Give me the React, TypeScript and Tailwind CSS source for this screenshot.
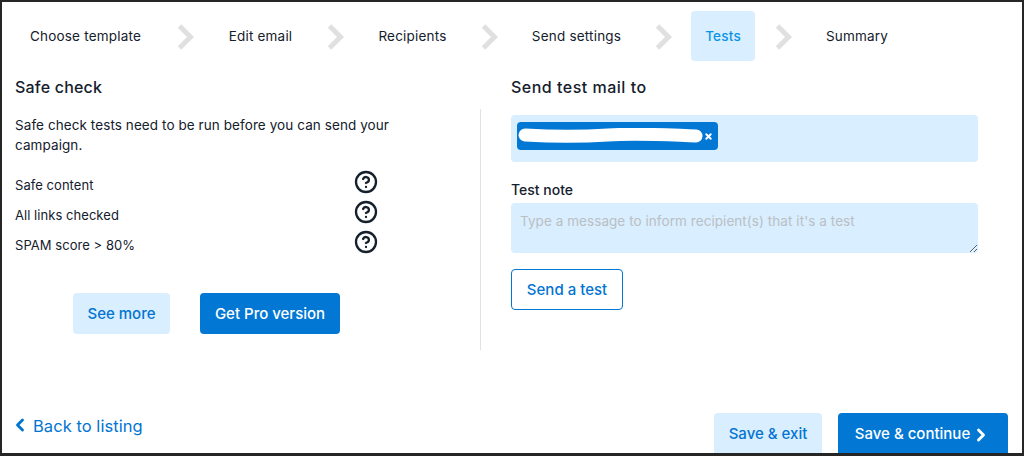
import { ChevronLeft, ChevronRight, CircleHelp, X } from 'lucide-react';

const STEPS = [
  { label: 'Choose template', width: 'w-[143px]' },
  { label: 'Edit email', width: 'w-[93px]' },
  { label: 'Recipients', width: 'w-[97px]' },
  { label: 'Send settings', width: 'w-[117px]' },
  { label: 'Tests', width: 'w-[64px] -ml-[1px]' },
  { label: 'Summary', width: 'w-[90px]' },
];
const CHECKS = ['Safe content', 'All links checked', 'SPAM score > 80%'];

// Big grey separator between the wizard steps
function StepArrow() {
  return (
    <svg width="16" height="26" viewBox="0 0 16 26" className="ml-[21px] mr-[20px] mt-[1px] flex-shrink-0">
      <path d="M1.5 2 L12.5 13 L1.5 24" fill="none" stroke="#e0e0e0" strokeWidth="5" />
    </svg>
  );
}

export default function App() {
  return (
    <div className="w-[1024px] h-[456px] flex flex-col overflow-hidden bg-white border-x-2 border-t-2 border-b-[3px] border-[#262626] text-[#14202c] font-['Inter','Liberation_Sans',sans-serif]">
      <nav className="flex items-center h-[50px] mt-[9px] ml-[12px]">
        {STEPS.map(({ label, width }, i) => (
          <div key={label} className="flex items-center">
            {i > 0 && <StepArrow />}
            <div
              className={`${width} h-[50px] flex items-center justify-center rounded text-[13.5px] tracking-[0.2px] ${
                label === 'Tests' ? 'bg-[#d9eefe] text-[#0a95e6] font-medium' : ''
              }`}
            >
              {label}
            </div>
          </div>
        ))}
      </nav>

      <div className="flex mt-[15px] ml-[13px]">
        <section className="w-[465px] flex-shrink-0">
          <h2 className="text-[16px] leading-[24px] font-medium tracking-[0.2px] -mt-[1px]">Safe check</h2>
          <p className="text-[13.5px] leading-[20px] mt-[16px] w-[400px] tracking-[0.08px]">
            Safe check tests need to be run before you can send your campaign.
          </p>
          <ul className="mt-[16px] flex flex-col gap-[8px]">
            {CHECKS.map((label) => (
              <li key={label} className="flex items-start h-[22px] w-[363px] justify-between">
                <span className="text-[13px] leading-[20px] mt-[4px] tracking-[0.05px]">{label}</span>
                <CircleHelp size={24} strokeWidth={2.3} className="text-[#14202c] -mt-[1px]" />
              </li>
            ))}
          </ul>
          <div className="flex gap-[30px] ml-[58px] mt-[40px]">
            <button type="button" className="w-[97px] h-[41px] pt-[2px] rounded bg-[#d9eefe] text-[#0274d1] text-[15px] font-medium">
              See more
            </button>
            <button type="button" className="w-[140px] h-[41px] pt-[2px] rounded bg-[#0277d4] text-white text-[15px] font-medium">
              Get Pro version
            </button>
          </div>
        </section>

        <section className="flex-1 flex">
          <div className="w-[1px] h-[241px] mt-[33px] bg-[#dfe3e6]" />
          <div className="w-[467px] ml-[30px]">
            <h2 className="text-[16px] leading-[24px] font-medium tracking-[0.5px] -mt-[1px]">Send test mail to</h2>
            <div className="h-[47px] rounded bg-[#d9eefe] mt-[16px] p-[6px] pt-[7px]">
              <div className="w-[201px] h-[28px] rounded bg-[#0277d4] flex items-center pl-[1px]">
                <svg width="186" height="16" viewBox="0 0 186 16">
                  <path d="M7 7 C40 9 60 9 90 7 S150 7 178 8" fill="none" stroke="#fff" strokeWidth="13" strokeLinecap="round" />
                </svg>
                <X size={9} strokeWidth={5} className="text-white" />
              </div>
            </div>
            <label className="block text-[14px] leading-[20px] font-medium mt-[18px]">Test note</label>
            <textarea
              placeholder="Type a message to inform recipient(s) that it's a test"
              className="block w-full h-[50px] mt-[3px] rounded bg-[#d9eefe] px-[9px] py-[8px] text-[13.5px] leading-[20px] tracking-[0.06px] placeholder:text-[#b9bfc4] outline-none"
            />
            <button type="button" className="block w-[112px] h-[41px] mt-[16px] pt-[2px] rounded border border-[#0277d4] text-[#0274d1] text-[15px] font-medium">
              Send a test
            </button>
          </div>
        </section>
      </div>

      <div className="flex-1 flex justify-between items-start ml-[13px] mr-[14px] mt-[63px]">
        <a className="flex items-center mt-[1px] text-[#0274d1] text-[16.5px] leading-[24px] tracking-[0.05px]">
          <ChevronLeft size={20} strokeWidth={3.4} className="mr-[3px] -mt-[3px] -ml-[5px]" />
          Back to listing
        </a>
        <div className="flex gap-[16px]">
          <button type="button" className="w-[108px] h-[44px] pb-[1px] rounded-t bg-[#d9eefe] text-[#0274d1] text-[15px] font-medium">
            Save &amp; exit
          </button>
          <button type="button" className="w-[170px] h-[44px] pb-[1px] rounded-t bg-[#0277d4] text-white text-[15px] font-medium flex items-center justify-center gap-[1px]">
            Save &amp; continue
            <ChevronRight size={20} strokeWidth={3.4} />
          </button>
        </div>
      </div>
    </div>
  );
}
